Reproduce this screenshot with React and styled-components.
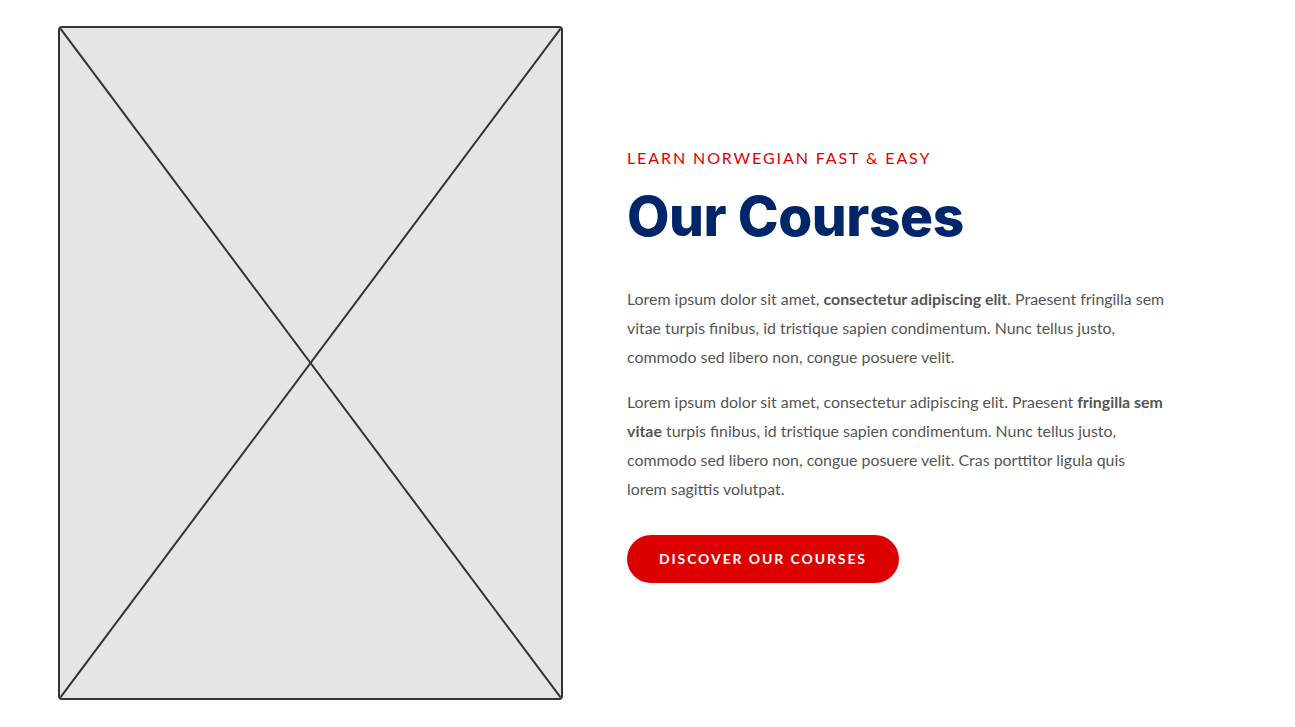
import React from "react";
import styled, { createGlobalStyle } from "styled-components";

const Global = createGlobalStyle`
  html, body { margin: 0; padding: 0; background: #ffffff; }
  body { font-family: "Lato", "Liberation Sans", sans-serif; }
`;

const Section = styled.section`
  display: flex;
  align-items: center;
  gap: 64px;
  padding: 26px 0 27px 58px;
  width: 1295px;
  box-sizing: border-box;
`;

const Placeholder = styled.div`
  flex: 0 0 auto;
  width: 505px;
  height: 674px;
  box-sizing: border-box;
  border: 2px solid #333333;
  border-radius: 4px;
  background: #e5e5e5;
  overflow: hidden;
  svg { display: block; width: 100%; height: 100%; }
`;

const Content = styled.div`
  width: 541px;
  margin-top: 4px;
  display: flex;
  flex-direction: column;
  align-items: flex-start;
`;

const Eyebrow = styled.div`
  font-family: "Lato", sans-serif;
  font-size: 16px;
  line-height: 20px;
  letter-spacing: 1.9px;
  color: #dd0000;
  text-transform: uppercase;
`;

const Title = styled.h2`
  margin: 15px 0 35px;
  font-family: "Inter", "Open Sans", sans-serif;
  font-weight: 800;
  font-size: 55px;
  line-height: 66px;
  letter-spacing: -0.45px;
  color: #00266a;
`;

const Paragraph = styled.p`
  margin: 0 0 16px;
  font-family: "Lato", sans-serif;
  font-size: 15.9px;
  line-height: 29px;
  color: #555555;
  b { font-weight: 700; }
  &:last-of-type { margin-bottom: 32px; }
`;

const Button = styled.button`
  height: 48px;
  padding: 0 32px;
  border: none;
  border-radius: 24px;
  background: #dd0000;
  color: #ffffff;
  font-family: "Lato", sans-serif;
  font-weight: 700;
  font-size: 14px;
  letter-spacing: 1.9px;
  text-transform: uppercase;
  cursor: pointer;
`;

export default function App() {
  return (
    <>
      <Global />
      <Section>
        <Placeholder>
          <svg viewBox="0 0 501 670" preserveAspectRatio="none">
            <line x1="0" y1="0" x2="501" y2="670" stroke="#333" strokeWidth="2" />
            <line x1="501" y1="0" x2="0" y2="670" stroke="#333" strokeWidth="2" />
          </svg>
        </Placeholder>
        <Content>
          <Eyebrow>Learn Norwegian fast &amp; easy</Eyebrow>
          <Title>Our Courses</Title>
          <Paragraph>
            Lorem ipsum dolor sit amet, <b>consectetur adipiscing elit</b>. Praesent fringilla sem
            vitae turpis finibus, id tristique sapien condimentum. Nunc tellus justo,
            commodo sed libero non, congue posuere velit.
          </Paragraph>
          <Paragraph>
            Lorem ipsum dolor sit amet, consectetur adipiscing elit. Praesent <b>fringilla sem
            vitae</b> turpis finibus, id tristique sapien condimentum. Nunc tellus justo,
            commodo sed libero non, congue posuere velit. Cras porttitor ligula quis
            lorem sagittis volutpat.
          </Paragraph>
          <Button>Discover our courses</Button>
        </Content>
      </Section>
    </>
  );
}
